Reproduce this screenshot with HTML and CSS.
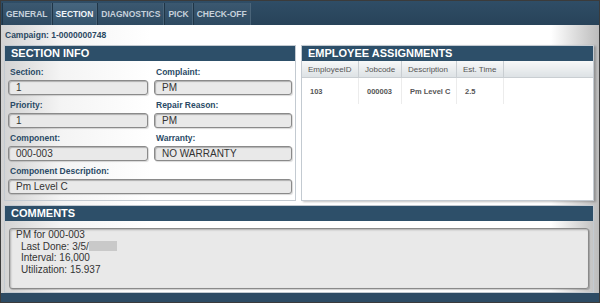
FILE: index.html
```html
<!DOCTYPE html>
<html lang="en">
<head>
  <meta charset="UTF-8">
  <title>Section</title>
  <link rel="stylesheet" href="styles.css">
</head>
<body>
  <div class="app">
    <nav class="tabs">
      <span class="tab">GENERAL</span>
      <span class="tab active">SECTION</span>
      <span class="tab">DIAGNOSTICS</span>
      <span class="tab">PICK</span>
      <span class="tab">CHECK-OFF</span>
    </nav>

    <main class="content">
      <div class="campaign">Campaign: 1-0000000748</div>

      <div class="panels">
        <section class="panel info">
          <h2 class="panel-title">SECTION INFO</h2>
          <div class="fields">
            <div class="field">
              <label>Section:</label>
              <div class="input">1</div>
            </div>
            <div class="field">
              <label>Complaint:</label>
              <div class="input">PM</div>
            </div>
            <div class="field">
              <label>Priority:</label>
              <div class="input">1</div>
            </div>
            <div class="field">
              <label>Repair Reason:</label>
              <div class="input">PM</div>
            </div>
            <div class="field">
              <label>Component:</label>
              <div class="input">000-003</div>
            </div>
            <div class="field">
              <label>Warranty:</label>
              <div class="input">NO WARRANTY</div>
            </div>
            <div class="field full">
              <label>Component Description:</label>
              <div class="input">Pm Level C</div>
            </div>
          </div>
        </section>

        <section class="panel assign">
          <h2 class="panel-title">EMPLOYEE ASSIGNMENTS</h2>
          <table class="grid">
            <thead>
              <tr>
                <th class="c-id">EmployeeID</th>
                <th class="c-job">Jobcode</th>
                <th class="c-desc">Description</th>
                <th class="c-time">Est. Time</th>
                <th class="c-rest"></th>
              </tr>
            </thead>
            <tbody>
              <tr>
                <td>103</td>
                <td>000003</td>
                <td>Pm Level C</td>
                <td>2.5</td>
                <td class="c-rest"></td>
              </tr>
            </tbody>
          </table>
        </section>

        <section class="panel comments">
          <h2 class="panel-title">COMMENTS</h2>
          <div class="comment-box">
            <div>PM for 000-003</div>
            <div class="indent">Last Done: 3/5/<span class="redacted"></span></div>
            <div class="indent">Interval: 16,000</div>
            <div class="indent">Utilization: 15.937</div>
          </div>
        </section>
      </div>
    </main>

    <footer class="bottom-bar"></footer>
  </div>
</body>
</html>
```

FILE: styles.css
```css
body, html {
  margin: 0;
  padding: 0;
  font-family: "Liberation Sans", Arial, sans-serif;
}

.app {
  width: 600px;
  height: 303px;
  box-sizing: border-box;
  border: 1px solid #3b3b3b;
  display: flex;
  flex-direction: column;
  overflow: hidden;
}

/* Top tab strip */
.tabs {
  height: 24px;
  flex: none;
  display: flex;
  align-items: flex-end;
  padding-left: 1px;
  background: linear-gradient(#2f4d66, #284359);
}

.tab {
  height: 22px;
  line-height: 22px;
  padding: 0 3px;
  font-size: 8.5px;
  font-weight: bold;
  color: #c6d1db;
  background: linear-gradient(#3b5870, #2e4a61);
  border-left: 1px solid #1f3547;
  border-right: 1px solid #4a6479;
}

.tab.active {
  color: #f2f6f9;
  background: linear-gradient(#47667f, #34536b);
}

/* Main area */
.content {
  flex: 1;
  display: flex;
  flex-direction: column;
  padding: 4px 5px 0 3px;
  background: linear-gradient(to right, #d2d2d2 0, #f4f4f4 60px, #fff 150px, #fff 550px, #bcbcbc 100%);
}

.campaign {
  height: 12px;
  line-height: 12px;
  padding-left: 1px;
  font-size: 8.5px;
  font-weight: bold;
  color: #2a4862;
}

.panels {
  margin-top: 4px;
  display: grid;
  grid-template-columns: 292px 1fr;
  grid-template-rows: 156px 88px;
  gap: 4px 5px;
}

.panel {
  box-sizing: border-box;
  border: 1px solid #c3cad1;
}

.panel-title {
  margin: 0;
  height: 15px;
  line-height: 15px;
  padding-left: 6px;
  font-size: 11px;
  font-weight: bold;
  color: #fff;
  background: #2d4f69;
}

/* Section info form */
.fields {
  display: grid;
  grid-template-columns: 140px 138px;
  column-gap: 6px;
  padding: 5px 3px 0 3px;
}

.field {
  margin-bottom: 4px;
}

.field.full {
  grid-column: span 2;
}

.field label {
  display: block;
  height: 14px;
  line-height: 13px;
  padding-left: 2px;
  font-size: 8.5px;
  font-weight: bold;
  color: #2a4a66;
}

.input {
  box-sizing: border-box;
  height: 15px;
  line-height: 13px;
  padding-left: 7px;
  font-size: 10px;
  color: #333;
  background: #e9e9e9;
  border: 1px solid #8a8a8a;
  border-radius: 3px;
  box-shadow: inset 1px 1px 1px rgba(0, 0, 0, 0.25), 1px 1px 1px rgba(0, 0, 0, 0.15);
}

/* Employee assignments grid */
.assign {
  background: #fff;
  box-shadow: 2px 1px 2px rgba(0, 0, 0, 0.25);
}

.grid {
  width: 100%;
  border-collapse: collapse;
  table-layout: fixed;
}

.grid th {
  height: 16px;
  padding: 0 0 0 6px;
  text-align: left;
  font-size: 8px;
  font-weight: normal;
  color: #555;
  background: linear-gradient(#f7f8f8, #dde2e5);
  border-right: 1px solid #c9ced2;
  border-bottom: 1px solid #c9ced2;
}

.grid td {
  height: 26px;
  padding: 0 0 0 8px;
  font-size: 7.5px;
  font-weight: bold;
  color: #555;
  border-right: 1px solid #ececec;
}

.grid .c-id { width: 50px; }
.grid .c-job { width: 36px; }
.grid .c-desc { width: 48px; }
.grid .c-time { width: 40px; }
.grid .c-rest { border-right: none; }

/* Comments */
.comments {
  grid-column: span 2;
}

.comment-box {
  box-sizing: border-box;
  height: 61px;
  margin: 7px 4px 0 4px;
  padding: 0 0 0 6px;
  font-size: 10px;
  line-height: 11.5px;
  color: #333;
  background: #e9e9e9;
  border: 1px solid #8a8a8a;
  border-radius: 3px;
  box-shadow: inset 1px 1px 2px rgba(0, 0, 0, 0.25), 1px 1px 1px rgba(0, 0, 0, 0.2);
}

.indent {
  padding-left: 5px;
}

.redacted {
  display: inline-block;
  width: 28px;
  height: 10px;
  vertical-align: -1px;
  background: #c9c9c9;
}

.bottom-bar {
  height: 9px;
  flex: none;
  background: #2d4b64;
}
```
